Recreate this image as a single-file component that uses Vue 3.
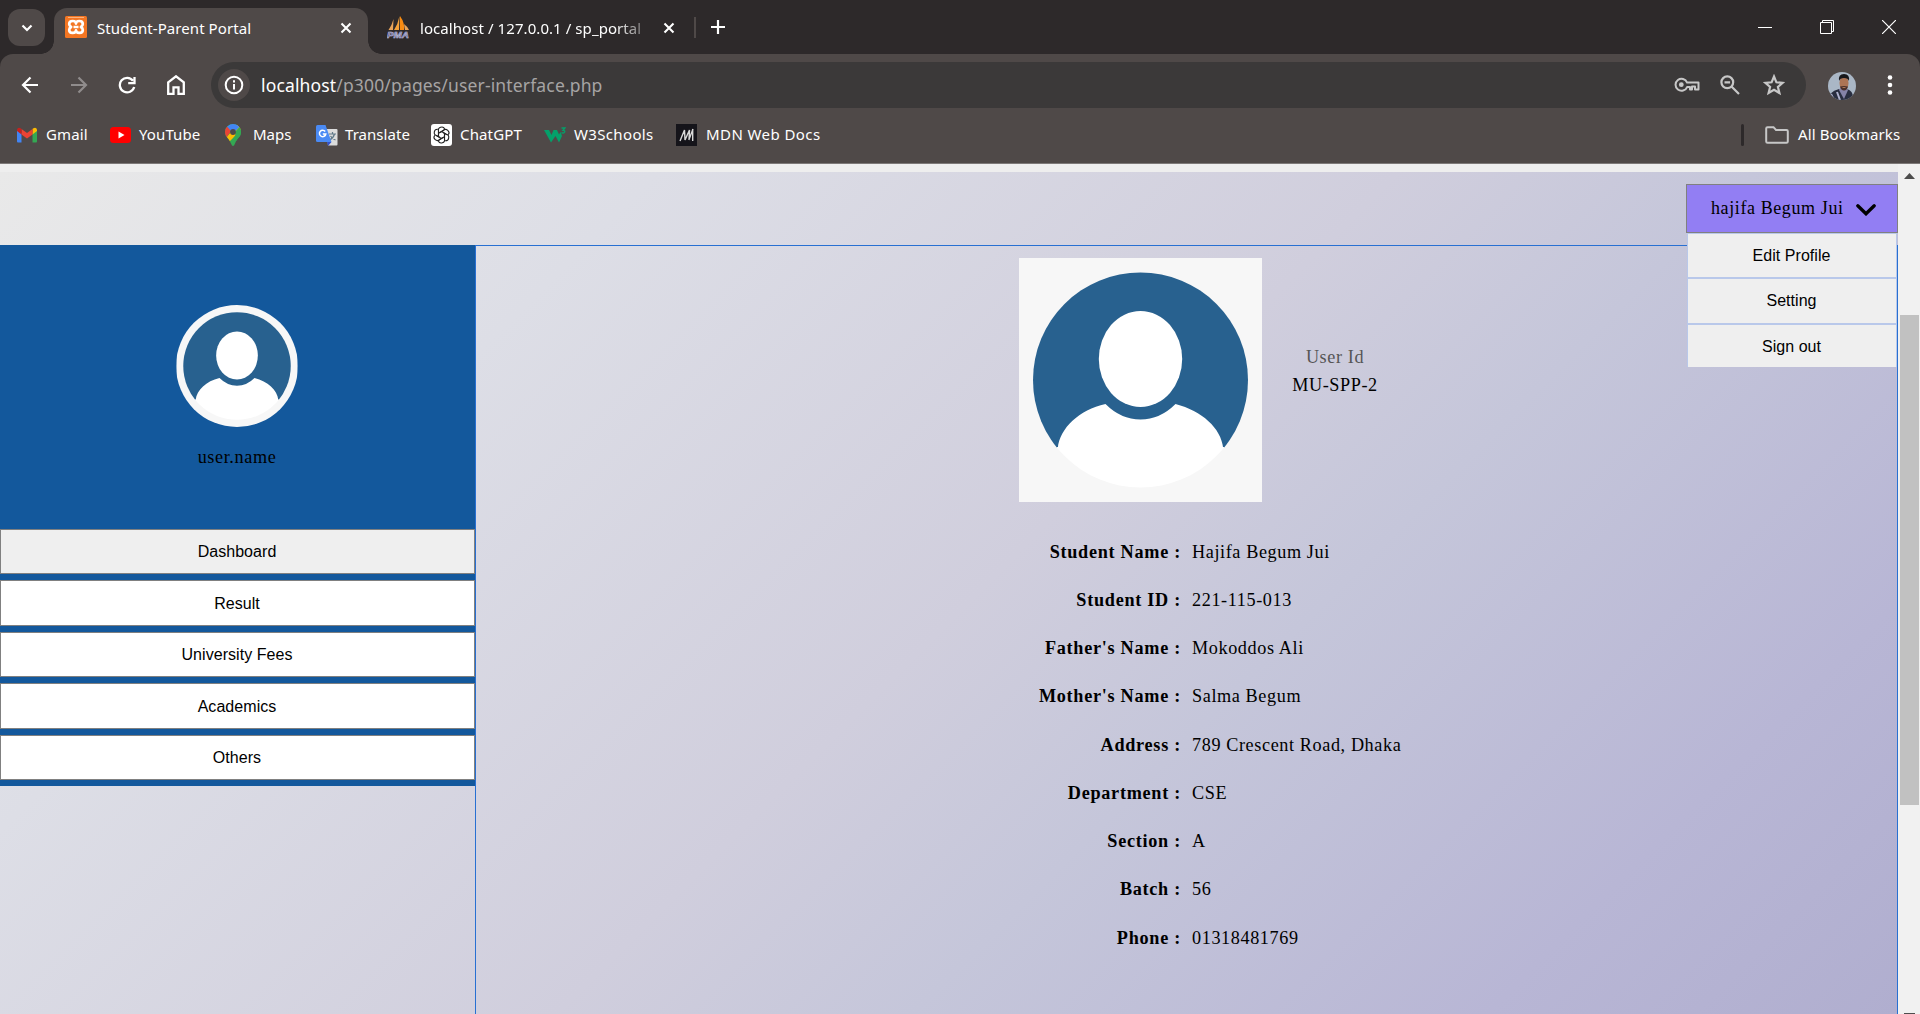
<script setup>
const bookmarks = [
  { id: 'gmail', label: 'Gmail' },
  { id: 'youtube', label: 'YouTube' },
  { id: 'maps', label: 'Maps' },
  { id: 'translate', label: 'Translate' },
  { id: 'chatgpt', label: 'ChatGPT' },
  { id: 'w3', label: 'W3Schools' },
  { id: 'mdn', label: 'MDN Web Docs' },
]
const menu = ['Edit Profile', 'Setting', 'Sign out']
const nav = ['Dashboard', 'Result', 'University Fees', 'Academics', 'Others']
const details = [
  ['Student Name', 'Hajifa Begum Jui'],
  ['Student ID', '221-115-013'],
  ["Father's Name", 'Mokoddos Ali'],
  ["Mother's Name", 'Salma Begum'],
  ['Address', '789 Crescent Road, Dhaka'],
  ['Department', 'CSE'],
  ['Section', 'A'],
  ['Batch', '56'],
  ['Phone', '01318481769'],
]
</script>

<template>
  <div class="window">
    <svg class="defs" width="0" height="0" aria-hidden="true">
      <symbol id="person" viewBox="0 0 243 244">
        <clipPath id="upper"><rect width="243" height="190" /></clipPath>
        <clipPath id="lower"><rect y="189" width="243" height="55" /></clipPath>
        <rect width="243" height="244" fill="#f7f7f7" />
        <circle cx="121.500" cy="122" r="107.500" fill="#28618f" clip-path="url(#upper)" />
        <circle cx="121.500" cy="122" r="107.500" fill="#fff" clip-path="url(#lower)" />
        <path d="M38.800 190C41 170 60 152 86.500 146Q102 161.500 121.500 161.500T156.500 146C183 153 202 170 204.200 190Z" fill="#fff" />
        <ellipse cx="121.500" cy="101" rx="41.700" ry="48" fill="#fff" />
      </symbol>
    </svg>

    <header class="tabs">
      <button class="tab-search">
        <svg width="12" height="8" viewBox="0 0 12 8"><path d="M1.500 1.500 6 6l4.500-4.500" fill="none" stroke="#fff" stroke-width="2.200" /></svg>
      </button>
      <div class="tab active">
        <svg width="22" height="22" viewBox="0 0 22 22">
          <rect width="22" height="22" rx="1.500" fill="#f37623" />
          <path d="M3 1.500h16" stroke="#f9b27f" />
          <path d="M11 7.600C11 5.800 9.500 5 7.700 5 5.600 5 4.200 6.200 4.200 8c0 1.400.8 2.300 1.900 3-1.100.7-1.900 1.700-1.900 3 0 1.700 1.400 2.900 3.400 2.900 1.900 0 3.400-.9 3.400-2.600 0 1.700 1.500 2.600 3.400 2.600 2 0 3.400-1.200 3.400-2.900 0-1.300-.8-2.300-1.900-3 1.100-.7 1.900-1.600 1.900-3 0-1.800-1.400-3-3.500-3C12.500 5 11 5.800 11 7.600Zm-2.500 3.400h5" fill="none" stroke="#fff" stroke-width="2.700" stroke-linejoin="round" />
        </svg>
        <span class="title">Student-Parent Portal</span>
        <svg class="x" width="12" height="12" viewBox="0 0 12 12"><path d="m1.500 1.500 9 9m0-9-9 9" stroke="#fff" stroke-width="2.100" /></svg>
      </div>
      <div class="tab second">
        <svg width="23" height="23" viewBox="0 0 23 23">
          <path d="M6.500 3 6 14H1.500Q5 9 6.500 3Z" fill="#e9a45a" />
          <path d="M12.500 0 12 14H7Q11 8 12.500 0Z" fill="#f6a23a" />
          <path d="M13 0q5 7 4 14h-4Z" fill="#f88b12" />
          <path d="M17 8q4 3 5 6h-4Z" fill="#e9a45a" />
          <text x="0" y="22" textLength="22" lengthAdjust="spacingAndGlyphs">PMA</text>
        </svg>
        <span class="title">localhost / 127.0.0.1 / sp_portal</span>
        <svg class="x" width="12" height="12" viewBox="0 0 12 12"><path d="m1.500 1.500 9 9m0-9-9 9" stroke="#fff" stroke-width="2.100" /></svg>
      </div>
      <span class="tab-sep"></span>
      <svg class="plus" width="14" height="14" viewBox="0 0 14 14"><path d="M7 0v14M0 7h14" stroke="#fff" stroke-width="2.200" /></svg>
      <div class="controls">
        <svg width="14" height="14" viewBox="0 0 14 14"><path d="M0 7.500h14" stroke="#fff" /></svg>
        <svg width="14" height="14" viewBox="0 0 14 14"><path d="M.5 2.500h11v11H.5ZM2.500 2.500v-2h11v11h-2" fill="none" stroke="#fff" /></svg>
        <svg width="14" height="14" viewBox="0 0 14 14"><path d="m0 0 14 14M14 0 0 14" stroke="#fff" stroke-width="1.200" /></svg>
      </div>
    </header>

    <div class="chrome">
      <div class="toolbar">
        <svg width="18" height="18" viewBox="0 0 18 18"><path d="M17 9H2M9.500 1.500 2 9l7.500 7.500" fill="none" stroke="#fff" stroke-width="2.200" /></svg>
        <svg width="18" height="18" viewBox="0 0 18 18"><path d="M1 9h15M8.500 1.500 16 9l-7.500 7.500" fill="none" stroke="#908c8c" stroke-width="2.200" /></svg>
        <svg width="18" height="18" viewBox="0 0 18 18"><path d="M15 4.700A7.300 7.300 0 1 0 16.200 11M16.500 1v6.200h-6.300" fill="none" stroke="#fff" stroke-width="2.300" /></svg>
        <svg width="18" height="20" viewBox="0 0 18 20"><path d="M1.200 7.300 9 1.300l7.800 6v11.500h-5.300v-6.500h-5v6.500H1.200Z" fill="none" stroke="#fff" stroke-width="2.300" /></svg>
        <div class="omnibox">
          <span class="info"><svg width="20" height="20" viewBox="0 0 20 20"><circle cx="10" cy="10" r="8.300" fill="none" stroke="#fff" stroke-width="2" /><path d="M10 9v5.500M10 5.300v2.200" stroke="#fff" stroke-width="2" /></svg></span>
          <span class="url"><b>localhost</b>/p300/pages/user-interface.php</span>
          <svg class="key" width="26" height="16" viewBox="0 0 26 16"><path d="M13.100 5.500h11.400v7h-3.500v-3h-3v3h-2v-2.500H13.100A6 6 0 1 1 13.100 5.500Z" fill="none" stroke="#c7c7c7" stroke-width="2" stroke-linejoin="round" /><circle cx="7.300" cy="7.700" r="2.400" fill="#c7c7c7" /></svg>
          <svg class="zoom" width="20" height="20" viewBox="0 0 20 20"><circle cx="7.300" cy="7.300" r="5.900" fill="none" stroke="#c7c7c7" stroke-width="2.200" /><path d="m11.500 11.500 7.500 7.500M4.500 7.300h5.600" stroke="#c7c7c7" stroke-width="2.200" /></svg>
          <svg class="star" width="22" height="22" viewBox="0 0 22 22"><path d="m11 2.500 2.400 5.800 6.300.5-4.800 4.100 1.500 6.100L11 15.700 5.600 19l1.500-6.100-4.800-4.100 6.300-.5Z" fill="none" stroke="#c7c7c7" stroke-width="2.200" /></svg>
        </div>
        <svg class="face" width="28" height="28" viewBox="0 0 28 28">
          <clipPath id="face"><circle cx="14" cy="14" r="14" /></clipPath>
          <g clip-path="url(#face)">
            <rect width="28" height="28" fill="#aab7c6" />
            <path d="M2 28V22q4-4 9-5l4 3 4-3q6 2 6 8v3Z" fill="#292e40" />
            <path d="m11 18 5 9 4-9-2-3h-5Z" fill="#8583a8" />
            <path d="M3 22 6 28H2M9 20l3 8" stroke="#aeb1cc" stroke-width="2" />
            <ellipse cx="16" cy="11" rx="4.500" ry="7" fill="#ad7455" />
            <path d="M11 9q-1-7 5-7 6 0 5 7-1-3-5-3t-5 3Z" fill="#17171b" />
            <path d="M12 14.500q4-1 8 0-1 4-4 4t-4-4Z" fill="#4b302b" />
            <path d="M14.500 15.500h3" stroke="#ad7455" />
          </g>
        </svg>
        <svg class="dots" width="6" height="20" viewBox="0 0 6 20" fill="#fff"><circle cx="3" cy="2.500" r="2.300" /><circle cx="3" cy="10" r="2.300" /><circle cx="3" cy="17.500" r="2.300" /></svg>
      </div>

      <nav class="bookmarks">
        <span v-for="b in bookmarks" :key="b.id" class="bookmark" :class="b.id">
          <svg v-if="b.id === 'gmail'" width="20" height="16" viewBox="0 0 20 16"><path d="M0 3v11.500q0 1 1 1h3.500V6Z" fill="#4285f4" /><path d="M20 3v11.500q0 1-1 1h-3.500V6Z" fill="#34a853" /><path d="M15.500 2v5.500L20 4V2.500q-1-3-4-1Z" fill="#fbbc04" /><path d="M4.500 7.500V2l5.500 4 5.500-4v5.500L10 11.500Z" fill="#ea4335" /><path d="M0 2.500V4l4.500 3.500V2l-.5-.5Q1-.5 0 2.500Z" fill="#c5221f" /></svg>
          <svg v-else-if="b.id === 'youtube'" width="21" height="16" viewBox="0 0 21 16"><rect width="21" height="16" rx="3.500" fill="#f00" /><path d="m8.500 4.500 6 3.500-6 3.500Z" fill="#fff" /></svg>
          <svg v-else-if="b.id === 'maps'" width="16" height="22" viewBox="0 0 16 22">
            <clipPath id="pin"><path d="M8 0a8 8 0 0 1 8 8c0 5-4 6-6 11.500Q9 22 8 22t-2-2.500C4 14 0 13 0 8a8 8 0 0 1 8-8Z" /></clipPath>
            <g clip-path="url(#pin)"><rect width="16" height="22" fill="#34a853" /><path d="M0 15 13 0h3v5l-8 9-4 4Z" fill="#fbbc04" /><path d="M0 12V1l7 5-6 8Z" fill="#ea4335" /><path d="M2 2.500 8-2l7 4.500-7 7Z" fill="#4285f4" /><path d="M10 8 15.500 2 17 10l-6 8Z" fill="#34a853" /></g>
            <circle cx="8" cy="8" r="2.900" fill="#4f4948" />
          </svg>
          <svg v-else-if="b.id === 'translate'" width="22" height="21" viewBox="0 0 22 21"><path d="M10 4h10.500q1 0 1 1v14.500q0 1-1 1H12Z" fill="#dcdcdc" /><path d="M13 9h7m-3.500-2v2m2 0q-1 4-5 6m1-4q2 3 5 4" fill="none" stroke="#607988" stroke-width="1.200" /><path d="m11 17h4.500L12 21Z" fill="#3450c8" /><path d="M1.500 0H9.500l6 17H1.500Q0 17 0 15.500V1.500Q0 0 1.500 0Z" fill="#4a8af4" /><path d="M9.200 6.500A3.200 3.200 0 1 0 9.800 9H6.800" fill="none" stroke="#fff" stroke-width="1.500" /></svg>
          <svg v-else-if="b.id === 'chatgpt'" width="21" height="22" viewBox="0 0 21 22"><rect width="21" height="22" rx="3" fill="#fff" /><g transform="translate(10.500 11)" fill="none" stroke="#222" stroke-width="1.100"><path v-for="n in 6" :key="n" :transform="`rotate(${n * 60})`" d="M-3 1.700V-3.800A3.300 3.300 0 0 1 3.200-6M-1.500-2.600 2.500-4.900" /></g></svg>
          <svg v-else-if="b.id === 'w3'" width="22" height="16" viewBox="0 0 22 16"><path d="M0 3h5l2.500 5 2-5h3.500l2 4.500L16.500 5 18 9l-3 6.500L11.500 9 7 15.500Z" fill="#04a06a" /><path d="M17.500 1H21l-2 2.300q2.500.2 1.500 2-1 1.200-3 .4" fill="none" stroke="#04a06a" stroke-width="1.300" /></svg>
          <svg v-else width="21" height="22" viewBox="0 0 21 22"><rect width="21" height="22" fill="#15141a" /><path d="m4 17 4.500-11 .5 10 4.500-10-.5 10M12.800 16 17 5M16.700 5v12" fill="none" stroke="#d8d8d8" stroke-width="1.400" /></svg>
          <span>{{ b.label }}</span>
        </span>
        <span class="mark-sep"></span>
        <svg width="24" height="18" viewBox="0 0 24 18"><path d="M1.200 2.500q0-1.300 1.300-1.300H8.500L11 4h10.500q1.300 0 1.300 1.300v10.200q0 1.300-1.300 1.300h-19q-1.300 0-1.300-1.300Z" fill="none" stroke="#c7c7c7" stroke-width="2" /></svg>
        <span class="all">All Bookmarks</span>
      </nav>
    </div>

    <div class="viewport">
      <div class="page">
        <div class="top">
          <div class="account">
            <button class="user"><span>hajifa Begum Jui</span><svg width="20" height="12" viewBox="0 0 20 12"><path d="m1.800 1.800 8.200 8 8.200-8" fill="none" stroke="#000" stroke-width="3.300" stroke-linecap="round" /></svg></button>
            <div class="menu"><button v-for="m in menu" :key="m">{{ m }}</button></div>
          </div>
        </div>
        <div class="body">
          <aside>
            <div class="who">
              <svg class="small" width="122" height="122" viewBox="0 0 243 244"><use href="#person" /></svg>
              <span>user.name</span>
            </div>
            <button v-for="n in nav" :key="n">{{ n }}</button>
          </aside>
          <main>
            <div class="identity">
              <svg width="243" height="244" viewBox="0 0 243 244"><use href="#person" /></svg>
              <div class="uid"><span>User Id</span><strong>MU-SPP-2</strong></div>
            </div>
            <dl>
              <div v-for="d in details" :key="d[0]"><dt>{{ d[0] }} :</dt><dd>{{ d[1] }}</dd></div>
            </dl>
          </main>
        </div>
      </div>
      <div class="scroll">
        <svg width="11" height="6" viewBox="0 0 11 6"><path d="M5.500 0 11 6H0Z" fill="#4d4d4d" /></svg>
        <span class="thumb"></span>
        <span class="down"></span>
      </div>
    </div>
  </div>
</template>

<style>
body { margin: 0; overflow: hidden; }
</style>

<style scoped>
* { box-sizing: border-box; }
button { font: inherit; color: inherit; border: 0; padding: 0; margin: 0; }
svg { display: block; flex: none; }
.defs { position: absolute; }
.window { width: 1920px; height: 1014px; display: flex; flex-direction: column; overflow: hidden; font-family: "Noto Sans", sans-serif; font-size: 15px; color: #fff; background: #2d292a; }

.tabs { height: 54px; display: flex; flex: none; }
.tab-search { width: 37px; height: 37px; margin: 9px 9px 0 8px; border-radius: 12px; background: #4f4948; display: grid; place-items: center; }
.tab { display: flex; align-items: center; margin-top: 8px; height: 46px; padding-bottom: 8px; white-space: nowrap; }
.active { width: 314px; padding-left: 11px; border-radius: 13px 13px 0 0; background: #4f4948; position: relative; }
.active::before, .active::after { content: ""; position: absolute; bottom: 0; width: 13px; height: 13px; }
.active::before { left: -13px; background: radial-gradient(circle at 0 0, transparent 12.500px, #4f4948 13px); }
.active::after { right: -13px; background: radial-gradient(circle at 100% 0, transparent 12.500px, #4f4948 13px); }
.title { margin-left: 10px; font-size: 15px; letter-spacing: .07px; line-height: 22px; margin-top: 1px; }
.active .title { width: 243px; }
.second { width: 312px; padding-left: 19px; }
.second .title { width: 223px; overflow: hidden; margin-right: 20px; -webkit-mask: linear-gradient(90deg, #000 195px, rgba(0,0,0,.3) 224px); mask: linear-gradient(90deg, #000 195px, rgba(0,0,0,.3) 224px); }
.second text { font: italic bold 8.500px "Liberation Sans", sans-serif; fill: #50508a; stroke: #c9c9e2; stroke-width: .5; }
.tab-sep { width: 2px; height: 21px; margin: 17px 15px 0 14px; background: #4f4948; }
.plus { margin-top: 20px; }
.x { margin-top: 1px; }
.controls { margin-left: auto; padding: 20px 24px 0 0; display: flex; gap: 48px; }

.chrome { height: 110px; flex: none; background: #4f4948; border-radius: 13px 13px 0 0; border-bottom: 1px solid #7d7978; }
.toolbar { height: 62px; display: flex; align-items: center; padding-left: 21px; }
.toolbar > svg { margin-right: 31px; }
.toolbar > svg:nth-child(2) { margin-right: 30px; }
.toolbar > svg:nth-child(3) { margin-right: 31px; }
.toolbar > svg:nth-child(4) { margin-right: 26px; }
.omnibox { width: 1595px; height: 46px; border-radius: 23px; background: #3b3939; display: flex; align-items: center; padding-left: 7px; }
.info { width: 32px; height: 32px; border-radius: 50%; background: #4f4948; display: grid; place-items: center; }
.url { margin-left: 11px; font-size: 17.500px; letter-spacing: .15px; color: #a6a4a4; white-space: nowrap; line-height: 24px; }
.url b { color: #fff; font-weight: 400; }
.key { margin-left: auto; }
.zoom { margin-left: 20px; }
.star { margin: 0 21px 0 23px; }
.toolbar > svg.face { margin: 1px 0 0 22px; }
.toolbar > svg.dots { margin: 0 0 0 31px; }

.bookmarks { height: 38px; display: flex; align-items: center; padding: 0 20px 0 17px; white-space: nowrap; line-height: 22px; }
.bookmark { display: flex; align-items: center; gap: 9px; }
.bookmark > span, .all { padding-bottom: 2px; }
.gmail { width: 93px; letter-spacing: .1px; }
.youtube { width: 115px; gap: 8px; letter-spacing: .1px; }
.maps { width: 91px; gap: 12px; }
.translate { width: 115px; gap: 7px; letter-spacing: .05px; }
.chatgpt { width: 113px; gap: 8px; letter-spacing: .15px; }
.w3 { width: 132px; gap: 8px; letter-spacing: .35px; }
.mdn { letter-spacing: .42px; }
.mark-sep { width: 3px; height: 22px; border-radius: 2px; background: #2d292a; margin-left: auto; }
.all { margin-left: 9px; width: 102px; letter-spacing: .1px; }
.mark-sep + svg { margin-left: 21px; }

.viewport { flex: 1; min-height: 0; display: flex; background: #f1f1f1; }
.page { width: 1898px; display: flex; flex-direction: column; border-top: 8px solid #eee; color: #000; font-family: "Liberation Serif", serif; font-size: 18.200px; letter-spacing: .6px; background: linear-gradient(135deg, #e9e9e9 0, #dddee6 24%, #d0cedd 51%, #c5c6da 64%, #b8b6d5 85%, #b0aecf 100%); }
.page button { font: 16px "Liberation Sans", sans-serif; letter-spacing: .05px; }
.top { height: 73px; flex: none; display: flex; justify-content: flex-end; padding-top: 12px; }
.account { width: 212px; position: relative; z-index: 2; }
.page .user { width: 212px; height: 49px; border: 1px solid #808080; background: #927ef3; display: flex; align-items: center; padding-left: 24px; font: 18px "Liberation Serif", serif; letter-spacing: .6px; }
.user svg { margin: 2px 0 0 12px; }
.menu { position: absolute; top: 49px; left: 1px; width: 210px; padding: 1px 1px 0; background: #b9c8ea; display: flex; flex-direction: column; gap: 2px; }
.page .menu button { height: 43px; padding-right: 1px; background: #efefef; }
.page .menu button:nth-child(2) { height: 44px; }
.page .menu button:last-child { height: 42px; padding-top: 1px; }
.body { flex: 1; min-height: 0; display: flex; align-items: flex-start; }
aside { width: 475px; display: flex; flex-direction: column; gap: 6px; padding-bottom: 6px; background: #13589c; }
.who { height: 278px; display: flex; flex-direction: column; align-items: center; padding: 60px 2px 0 0; }
.small { border-radius: 50%; }
.who span { margin: 20px 0 0 1px; line-height: 20px; }
aside button { height: 45px; border: 1px solid #808080; padding-right: 1px; background: #fff; }
aside button:nth-child(2) { background: #efefef; }
aside button:nth-child(odd) { height: 46px; padding-top: 1px; }
main { width: 1423px; align-self: stretch; border: 1px solid #2870d2; border-bottom: 0; padding-top: 12px; }
.identity { display: flex; align-items: center; padding-left: 543px; }
.uid { width: 86px; margin: -18px 0 0 30px; display: flex; flex-direction: column; align-items: center; line-height: 28px; white-space: nowrap; }
.uid span { color: #555; }
.uid strong { font-weight: 400; }
dl { margin: 26px 0 0; }
dl div { display: flex; height: 48.250px; align-items: center; }
dt { width: 705px; text-align: right; font-weight: 700; letter-spacing: .72px; }
dd { margin: 0 0 0 11px; }
.scroll { width: 22px; padding: 9px 1px 0 2px; display: flex; flex-direction: column; align-items: center; }
.thumb { width: 19px; height: 490px; margin-top: 136px; background: #c1c1c1; }
.down { width: 11px; height: 1px; margin-top: auto; background: #4d4d4d; }
</style>
